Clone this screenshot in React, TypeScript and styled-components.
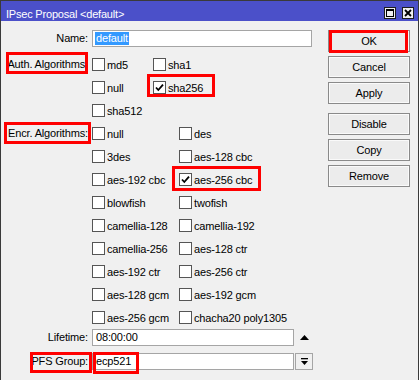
import React from "react";
import styled, { createGlobalStyle, css } from "styled-components";

const Global = createGlobalStyle`
  html, body { margin: 0; padding: 0; background: #f0f0f0; }
  body {
    font-family: "Liberation Sans", Arial, sans-serif;
    font-size: 11px;
    color: #000;
  }
  * { box-sizing: border-box; }
`;

const mark = (inset: string) => css`
  position: relative;
  &::after {
    content: "";
    position: absolute;
    inset: ${inset};
    border: 3px solid #ff0000;
    pointer-events: none;
  }
`;

const Window = styled.div`
  width: 419px;
  height: 380px;
  border: 1px solid #3a3a3a;
  border-bottom: none;
  background: #f0f0f0;
  display: flex;
  flex-direction: column;
  overflow: hidden;
  letter-spacing: -0.15px;
`;

const TitleBar = styled.div`
  height: 20px;
  flex: none;
  background: #4b50c9;
  color: #fff;
  display: flex;
  align-items: flex-start;
  padding: 0 4px 0 5px;
`;

const TitleText = styled.span`
  flex: 1;
  padding-top: 7px;
  line-height: 12px;
  font-size: 11px;
  letter-spacing: -0.2px;
`;

const TitleButtons = styled.div`
  display: flex;
  gap: 6px;
  margin-top: 6px;
`;

const TitleButton = styled.span`
  width: 12px;
  height: 12px;
  border: 1px solid #1e1e1e;
  background: #f0f0f0;
  display: flex;
  align-items: center;
  justify-content: center;
`;

const Body = styled.div`
  flex: 1;
  display: flex;
`;

const Form = styled.div`
  flex: 1;
  display: flex;
  flex-direction: column;
  padding-top: 9px;
`;

const Row = styled.div<{ $h: number }>`
  display: flex;
  align-items: flex-start;
  height: ${(p) => p.$h}px;
  flex: none;
`;

const LabelCell = styled.div<{ $h: number }>`
  width: 87px;
  margin-right: 4px;
  height: ${(p) => p.$h}px;
  display: flex;
  align-items: center;
  justify-content: flex-end;
  flex: none;
`;

const LabelText = styled.span<{ $mark?: string }>`
  line-height: 15px;
  white-space: nowrap;
  ${(p) => (p.$mark ? mark(p.$mark) : "")}
`;

const Input = styled.div<{ $w: number }>`
  width: ${(p) => p.$w}px;
  height: 17px;
  background: #fff;
  border: 1px solid #a5a5a5;
  display: flex;
  align-items: center;
  padding-left: 2px;
  flex: none;
`;

const Value = styled.span<{ $mark?: string; $selected?: boolean }>`
  line-height: 13px;
  padding: 0 1px;
  white-space: nowrap;
  ${(p) =>
    p.$selected
      ? css`
          background: #3399ff;
          color: #fff;
        `
      : ""}
  ${(p) => (p.$mark ? mark(p.$mark) : "")}
`;

const CheckGrid = styled.div<{ $cols: string }>`
  display: grid;
  grid-template-columns: ${(p) => p.$cols};
  grid-auto-rows: 23px;
`;

const CheckItem = styled.label<{ $mark?: string }>`
  display: flex;
  align-items: center;
  gap: 2px;
  height: 23px;
  justify-self: start;
  white-space: nowrap;
  ${(p) => (p.$mark ? mark(p.$mark) : "")}
`;

const Box = styled.span`
  width: 13px;
  height: 13px;
  flex: none;
  background: #fff;
  border: 1px solid #555;
  display: flex;
  align-items: center;
  justify-content: center;
`;

const Spinner = styled.span`
  width: 16px;
  height: 17px;
  margin-left: 2px;
  display: flex;
  align-items: center;
  justify-content: center;
`;

const DropButton = styled.span`
  width: 18px;
  height: 17px;
  margin-left: 1px;
  border: 1px solid #a5a5a5;
  background: #f0f0f0;
  display: flex;
  align-items: center;
  justify-content: center;
`;

const ButtonColumn = styled.div`
  width: 82px;
  margin-right: 8px;
  padding-top: 9px;
  display: flex;
  flex-direction: column;
  gap: 4px;
`;

const Button = styled.div<{ $gapBefore?: boolean; $mark?: string }>`
  height: 22px;
  border: 1px solid #8a8a8a;
  background: #ececec;
  box-shadow: inset 0 0 0 1px #fafafa;
  display: flex;
  align-items: center;
  justify-content: center;
  margin-top: ${(p) => (p.$gapBefore ? 5 : 0)}px;
  ${(p) => (p.$mark ? mark(p.$mark) : "")}
`;

const Check = ({ on }: { on?: boolean }) => (
  <Box>
    {on && (
      <svg width="11" height="11" viewBox="0 0 11 11">
        <polyline points="2,5.5 4.3,8 9,2.6" fill="none" stroke="#000" strokeWidth="1.8" />
      </svg>
    )}
  </Box>
);

type Item = { label: string; on?: boolean; mark?: string };

const auth: Item[] = [
  { label: "md5" },
  { label: "sha1" },
  { label: "null" },
  { label: "sha256", on: true, mark: "-2px -12px 2px -6px" },
  { label: "sha512" },
];

const encr: Item[] = [
  { label: "null" },
  { label: "des" },
  { label: "3des" },
  { label: "aes-128 cbc" },
  { label: "aes-192 cbc" },
  { label: "aes-256 cbc", on: true, mark: "-2px -9px 0px -7px" },
  { label: "blowfish" },
  { label: "twofish" },
  { label: "camellia-128" },
  { label: "camellia-192" },
  { label: "camellia-256" },
  { label: "aes-128 ctr" },
  { label: "aes-192 ctr" },
  { label: "aes-256 ctr" },
  { label: "aes-128 gcm" },
  { label: "aes-192 gcm" },
  { label: "aes-256 gcm" },
  { label: "chacha20 poly1305" },
];

const Checks = ({ items, cols }: { items: Item[]; cols: string }) => (
  <CheckGrid $cols={cols}>
    {items.map((it) => (
      <CheckItem key={it.label} $mark={it.mark}>
        <Check on={it.on} />
        <span>{it.label}</span>
      </CheckItem>
    ))}
  </CheckGrid>
);

export default function App() {
  return (
    <>
      <Global />
      <Window>
        <TitleBar>
          <TitleText>IPsec Proposal &lt;default&gt;</TitleText>
          <TitleButtons>
            <TitleButton>
              <svg width="10" height="10" viewBox="0 0 10 10">
                <rect x="1.5" y="1.5" width="7" height="7" fill="none" stroke="#000" strokeWidth="1" />
                <rect x="1" y="1" width="8" height="2" fill="#000" />
              </svg>
            </TitleButton>
            <TitleButton>
              <svg width="10" height="10" viewBox="0 0 10 10">
                <path d="M2 2 L8 8 M8 2 L2 8" stroke="#000" strokeWidth="1.8" />
              </svg>
            </TitleButton>
          </TitleButtons>
        </TitleBar>
        <Body>
          <Form>
            <Row $h={23}>
              <LabelCell $h={17}>
                <LabelText>Name:</LabelText>
              </LabelCell>
              <Input $w={220}>
                <Value $selected>default</Value>
              </Input>
            </Row>
            <Row $h={69}>
              <LabelCell $h={23}>
                <LabelText $mark="-5px 0px -2px -1px">Auth. Algorithms:</LabelText>
              </LabelCell>
              <Checks items={auth} cols="61px auto" />
            </Row>
            <Row $h={207}>
              <LabelCell $h={23}>
                <LabelText $mark="-4px -3px -3px -4px">Encr. Algorithms:</LabelText>
              </LabelCell>
              <Checks items={encr} cols="87px auto" />
            </Row>
            <Row $h={24}>
              <LabelCell $h={17}>
                <LabelText>Lifetime:</LabelText>
              </LabelCell>
              <Input $w={202}>
                <Value>08:00:00</Value>
              </Input>
              <Spinner>
                <svg width="9" height="5" viewBox="0 0 9 5">
                  <polygon points="0,5 4.5,0 9,5" fill="#000" />
                </svg>
              </Spinner>
            </Row>
            <Row $h={17}>
              <LabelCell $h={17}>
                <LabelText $mark="-2px -4px -4px -1px">PFS Group:</LabelText>
              </LabelCell>
              <Input $w={202}>
                <Value $mark="-3px -7px -6px -2px">ecp521</Value>
              </Input>
              <DropButton>
                <svg width="9" height="8" viewBox="0 0 9 8">
                  <rect x="1" y="0" width="7" height="1.3" fill="#000" />
                  <polygon points="1,3 8,3 4.5,7" fill="#000" />
                </svg>
              </DropButton>
            </Row>
          </Form>
          <ButtonColumn>
            <Button $mark="-1px 1px -2px 0px">OK</Button>
            <Button>Cancel</Button>
            <Button>Apply</Button>
            <Button $gapBefore>Disable</Button>
            <Button>Copy</Button>
            <Button>Remove</Button>
          </ButtonColumn>
        </Body>
      </Window>
    </>
  );
}
